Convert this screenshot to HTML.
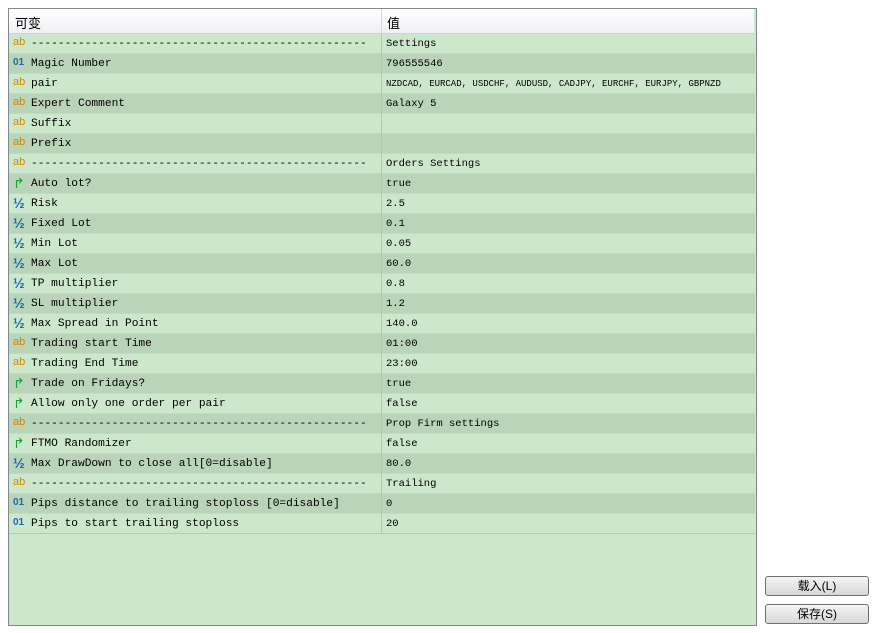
<!DOCTYPE html>
<html><head><meta charset="utf-8"><style>
body{margin:0;width:877px;height:633px;background:#fff;position:relative;overflow:hidden;font-family:"Liberation Mono","Noto Sans CJK SC",monospace;}
#panel{position:absolute;left:8px;top:8px;width:747px;height:616px;border:1px solid #7f8a8a;background:#cde7cd;}
#hdr{position:absolute;left:0;top:0;width:745px;height:24px;background:linear-gradient(#fff,#f0f0f4);border-bottom:1px solid #d0d0d8;font-family:"Liberation Sans","Noto Sans CJK SC",sans-serif;font-size:13px;}
#hdr span{position:absolute;top:4px}
#hdr .d{position:absolute;left:372px;top:0;width:1px;height:24px;background:#d8d8e0}
.row{position:absolute;left:0;width:746px;height:20px;font-size:11.2px;line-height:20px;border-bottom:1px solid #c2dcc2;box-sizing:border-box}
.l{background:#cde7cd}.k{background:#b9d4b9}
.ic{position:absolute;left:4px;width:16px;font-family:"Liberation Sans",sans-serif;font-size:11px}
.n{position:absolute;left:22px;white-space:pre}
.v{position:absolute;left:372px;padding-left:4px;border-left:1px solid #b0c8b0;height:20px;white-space:pre;font-size:10.5px}
.ab{color:#d08a00;top:-2px}.o1{color:#1a6aa8;font-weight:bold;font-size:10px;top:-1px}.h{color:#1a6aa8;font-weight:bold;font-size:14px;top:-1px}.ar{color:#1aa03a;font-size:14px;top:-1px}
.btn{position:absolute;left:765px;width:102px;height:18px;border:1px solid #707070;border-radius:3px;background:linear-gradient(#f4f4f4,#d8d8d8);font-family:"Liberation Sans","Noto Sans CJK SC",sans-serif;font-size:12px;text-align:center;line-height:18px}
</style></head><body>
<div id="panel">
<div id="hdr"><span style="left:6px">可变</span><div class="d"></div><span style="left:378px">值</span></div>
<div class="row l" style="top:25px"><span class="ic ab">ab</span><span class="n">--------------------------------------------------</span><span class="v">Settings</span></div>
<div class="row k" style="top:45px"><span class="ic o1">01</span><span class="n">Magic Number</span><span class="v">796555546</span></div>
<div class="row l" style="top:65px"><span class="ic ab">ab</span><span class="n">pair</span><span class="v" style="font-size:9px">NZDCAD, EURCAD, USDCHF, AUDUSD, CADJPY, EURCHF, EURJPY, GBPNZD</span></div>
<div class="row k" style="top:85px"><span class="ic ab">ab</span><span class="n">Expert Comment</span><span class="v">Galaxy 5</span></div>
<div class="row l" style="top:105px"><span class="ic ab">ab</span><span class="n">Suffix</span><span class="v"></span></div>
<div class="row k" style="top:125px"><span class="ic ab">ab</span><span class="n">Prefix</span><span class="v"></span></div>
<div class="row l" style="top:145px"><span class="ic ab">ab</span><span class="n">--------------------------------------------------</span><span class="v">Orders Settings</span></div>
<div class="row k" style="top:165px"><span class="ic ar">↱</span><span class="n">Auto lot?</span><span class="v">true</span></div>
<div class="row l" style="top:185px"><span class="ic h">½</span><span class="n">Risk</span><span class="v">2.5</span></div>
<div class="row k" style="top:205px"><span class="ic h">½</span><span class="n">Fixed Lot</span><span class="v">0.1</span></div>
<div class="row l" style="top:225px"><span class="ic h">½</span><span class="n">Min Lot</span><span class="v">0.05</span></div>
<div class="row k" style="top:245px"><span class="ic h">½</span><span class="n">Max Lot</span><span class="v">60.0</span></div>
<div class="row l" style="top:265px"><span class="ic h">½</span><span class="n">TP multiplier</span><span class="v">0.8</span></div>
<div class="row k" style="top:285px"><span class="ic h">½</span><span class="n">SL multiplier</span><span class="v">1.2</span></div>
<div class="row l" style="top:305px"><span class="ic h">½</span><span class="n">Max Spread in Point</span><span class="v">140.0</span></div>
<div class="row k" style="top:325px"><span class="ic ab">ab</span><span class="n">Trading start Time</span><span class="v">01:00</span></div>
<div class="row l" style="top:345px"><span class="ic ab">ab</span><span class="n">Trading End Time</span><span class="v">23:00</span></div>
<div class="row k" style="top:365px"><span class="ic ar">↱</span><span class="n">Trade on Fridays?</span><span class="v">true</span></div>
<div class="row l" style="top:385px"><span class="ic ar">↱</span><span class="n">Allow only one order per pair</span><span class="v">false</span></div>
<div class="row k" style="top:405px"><span class="ic ab">ab</span><span class="n">--------------------------------------------------</span><span class="v">Prop Firm settings</span></div>
<div class="row l" style="top:425px"><span class="ic ar">↱</span><span class="n">FTMO Randomizer</span><span class="v">false</span></div>
<div class="row k" style="top:445px"><span class="ic h">½</span><span class="n">Max DrawDown to close all[0=disable]</span><span class="v">80.0</span></div>
<div class="row l" style="top:465px"><span class="ic ab">ab</span><span class="n">--------------------------------------------------</span><span class="v">Trailing</span></div>
<div class="row k" style="top:485px"><span class="ic o1">01</span><span class="n">Pips distance to trailing stoploss [0=disable]</span><span class="v">0</span></div>
<div class="row l" style="top:505px;border-bottom:1px solid #b8c8b8"><span class="ic o1">01</span><span class="n">Pips to start trailing stoploss</span><span class="v">20</span></div>
</div>
<div class="btn" style="top:576px">载入(L)</div>
<div class="btn" style="top:604px">保存(S)</div>
</body></html>
